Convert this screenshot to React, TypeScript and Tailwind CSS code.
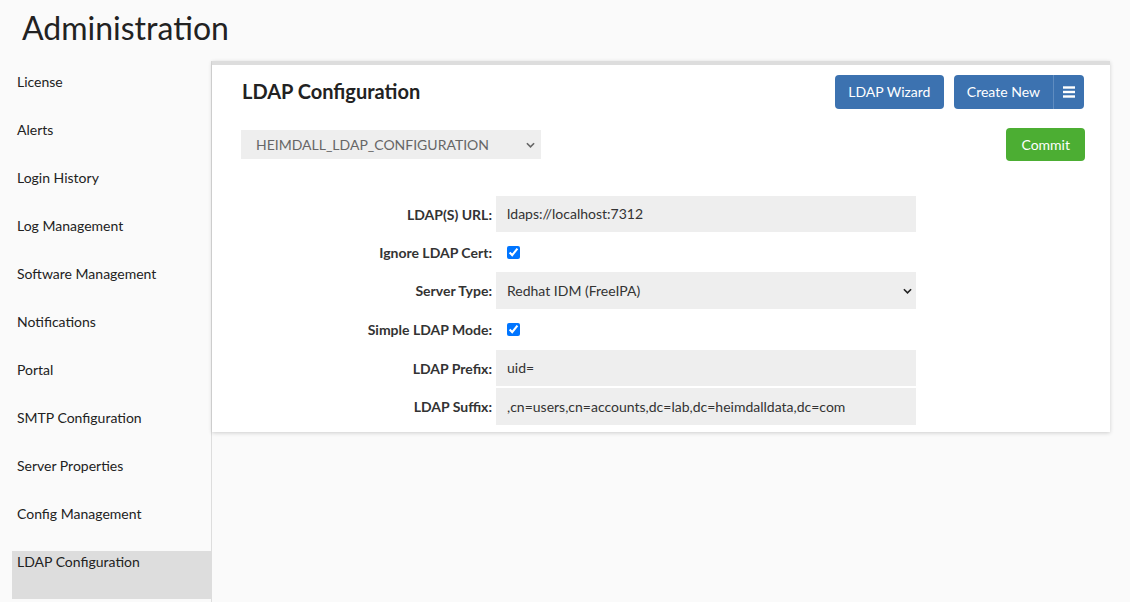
import { useState } from "react";

const navItems = [
  "License",
  "Alerts",
  "Login History",
  "Log Management",
  "Software Management",
  "Notifications",
  "Portal",
  "SMTP Configuration",
  "Server Properties",
  "Config Management",
  "LDAP Configuration",
];

function Chevron({ className }: { className?: string }) {
  return (
    <svg viewBox="0 0 10 6" className={className} fill="none" stroke="currentColor" strokeWidth="1.8">
      <path d="M1 1l4 4 4-4" />
    </svg>
  );
}

export default function App() {
  const [active] = useState("LDAP Configuration");
  const [ignoreCert, setIgnoreCert] = useState(true);
  const [simpleMode, setSimpleMode] = useState(true);

  return (
    <div className="h-screen w-full bg-[#fafafa] text-[#333] font-['Lato','Open_Sans',sans-serif] overflow-hidden">
      {/* Header */}
      <h1 className="pl-[22px] pt-[8px] h-[61px] text-[32px] leading-[40px] text-[#222]">Administration</h1>

      <div className="flex items-start">
        {/* Sidebar */}
        <div className="ml-[12px] w-[200px] shrink-0 pt-[10px] border-r border-[#ddd] h-[541px]">
          {navItems.map((item) => (
            <div
              key={item}
              className={`h-12 pl-[5px] pt-[1px] text-[14px] leading-5 text-[#222] ${
                item === active ? "bg-[#dddddd]" : ""
              }`}
            >
              {item}
            </div>
          ))}
        </div>

        {/* Panel */}
        <div className="w-[898px] bg-white border-t-4 border-[#dddddd] shadow-[0_1px_4px_rgba(0,0,0,0.18)] pl-[30px] pr-[25px] pt-[10px] pb-[7px]">
          <div className="flex items-center justify-between">
            <h2 className="-mt-[2px] text-[20px] font-bold leading-[28px] text-[#222]">LDAP Configuration</h2>
            <div className="flex gap-[10px] mr-px">
              <button className="h-[34px] w-[109px] pb-px rounded-[4px] bg-[#3c72b0] text-white text-[14px]">LDAP Wizard</button>
              <div className="flex h-[34px] rounded-[4px] bg-[#3c72b0] text-white text-[14px]">
                <button className="px-[13px] pb-px border-r border-[#5f8cc0]">Create New</button>
                <button className="w-[30px] flex items-center justify-center">
                  <svg viewBox="0 0 12 12" className="w-[12px] h-[12px]" fill="white">
                    <rect x="0" y="0.3" width="12" height="2.4" />
                    <rect x="0" y="4.8" width="12" height="2.4" />
                    <rect x="0" y="9.3" width="12" height="2.4" />
                  </svg>
                </button>
              </div>
            </div>
          </div>

          <div className="flex items-center justify-between mt-[19px]">
            <div className="relative w-[300px] h-[29px] -ml-px bg-[#eeeeee]">
              <select className="appearance-none w-full h-full bg-transparent pl-[15px] text-[14px] text-[#666] uppercase outline-none">
                <option>HEIMDALL_LDAP_CONFIGURATION</option>
              </select>
              <Chevron className="absolute right-[6px] top-[12px] w-[9px] h-[6px] text-[#666] pointer-events-none" />
            </div>
            <button className="h-[33px] px-[15px] pb-px rounded-[4px] bg-[#4cae33] text-white text-[14px]">Commit</button>
          </div>

          {/* Form */}
          <div className="mt-[35px] grid grid-cols-[250px_420px] gap-x-[4px] text-[14px]">
            <label className="h-[36px] flex items-center justify-end font-bold">LDAP(S) URL:</label>
            <div className="h-[36px] bg-[#eeeeee] flex items-center pl-[11px] pb-px">ldaps://localhost:7312</div>

            <label className="h-[40px] flex items-center justify-end font-bold">Ignore LDAP Cert:</label>
            <div className="h-[40px] flex items-center">
              <input
                type="checkbox"
                checked={ignoreCert}
                onChange={(e) => setIgnoreCert(e.target.checked)}
                className="ml-[11px] w-[13px] h-[13px] accent-[#0075ff]"
              />
            </div>

            <label className="h-[37px] flex items-center justify-end font-bold">Server Type:</label>
            <div className="relative h-[37px] bg-[#eeeeee]">
              <select className="appearance-none w-full h-full bg-transparent pl-[11px] text-[14px] text-[#333] outline-none">
                <option>Redhat IDM (FreeIPA)</option>
              </select>
              <Chevron className="absolute right-[4px] top-[16px] w-[9px] h-[6px] text-[#222] pointer-events-none" />
            </div>

            <label className="h-[41px] flex items-center justify-end font-bold">Simple LDAP Mode:</label>
            <div className="h-[41px] flex items-center">
              <input
                type="checkbox"
                checked={simpleMode}
                onChange={(e) => setSimpleMode(e.target.checked)}
                className="ml-[11px] w-[13px] h-[13px] accent-[#0075ff]"
              />
            </div>

            <label className="h-[36px] flex items-center justify-end font-bold">LDAP Prefix:</label>
            <div className="h-[36px] bg-[#eeeeee] flex items-center pl-[11px] pb-px">uid=</div>

            <label className="mt-[2px] h-[37px] flex items-center justify-end font-bold">LDAP Suffix:</label>
            <div className="mt-[2px] h-[37px] bg-[#eeeeee] flex items-center pl-[11px]">
              ,cn=users,cn=accounts,dc=lab,dc=heimdalldata,dc=com
            </div>
          </div>
        </div>
      </div>
    </div>
  );
}
